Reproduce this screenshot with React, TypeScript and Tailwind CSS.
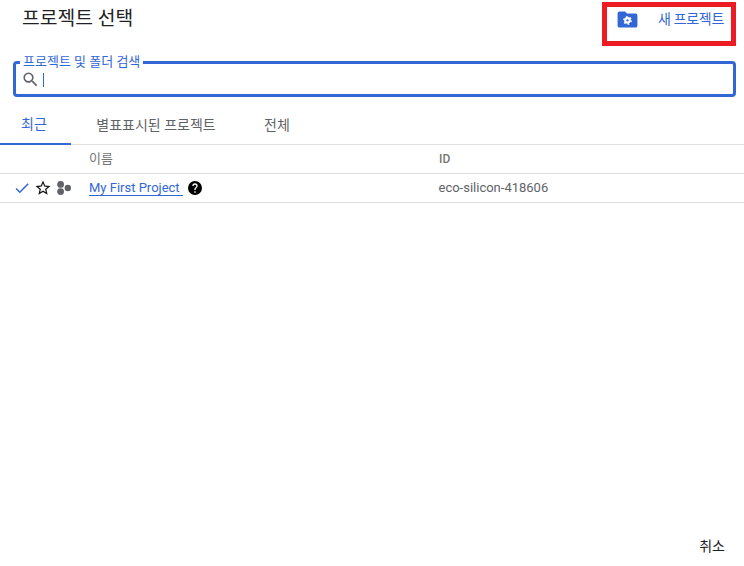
const font = "font-['Roboto','Noto_Sans_CJK_KR',sans-serif]";

function FolderGear() {
  return (
    <svg width="21" height="17" viewBox="0 0 22 18">
      <path d="M2.5 0.5h6l2 2.2h9a2 2 0 0 1 2 2V15.5a2 2 0 0 1-2 2h-17a2 2 0 0 1-2-2V2.5a2 2 0 0 1 2-2z" fill="#3367d6" />
      <circle cx="11" cy="10" r="2.4" fill="none" stroke="#fff" strokeWidth="2.4" />
      <circle cx="11" cy="10" r="4" fill="none" stroke="#fff" strokeWidth="1.4" strokeDasharray="1.8 2.39" />
    </svg>
  );
}

function OrgDots() {
  return (
    <svg width="14" height="14" viewBox="0 0 14 14" fill="#5f6368">
      <circle cx="3.6" cy="3.4" r="3.4" />
      <circle cx="3.6" cy="10.6" r="3.4" />
      <circle cx="10.8" cy="7" r="3.2" />
    </svg>
  );
}

export default function App() {
  return (
    <div className={`${font} w-[744px] h-[566px] bg-white flex flex-col overflow-hidden`}>
      <div className="h-[61px] flex items-start justify-between pl-[22px] pr-2 pt-[2px]">
        <h1 className="text-[19.3px] leading-[30px] mt-[2px] text-[#202124] font-normal">프로젝트 선택</h1>
        <div className="w-[134px] h-[44px] border-[5px] border-[#ed1c24] flex items-center justify-between pl-[10px] pr-[7px] pb-[9px]">
          <FolderGear />
          <span className="text-[14px] tracking-[-0.3px] text-[#3367d6]">새 프로젝트</span>
        </div>
      </div>

      <div className="relative mx-2 ml-[13px] h-[36px] border-[3px] border-[#3367d6] rounded-[4px] flex items-center pl-[5px] pt-[1px]">
        <span className="absolute left-[4px] -top-[9px] bg-white px-[3px] text-[13px] leading-[14px] text-[#3367d6]">프로젝트 및 폴더 검색</span>
        <svg width="19" height="19" viewBox="0 0 24 24" fill="#5f6368">
          <path d="M15.5 14h-.79l-.28-.27A6.47 6.47 0 0 0 16 9.5 6.5 6.5 0 1 0 9.5 16c1.61 0 3.09-.59 4.23-1.57l.27.28v.79l5 4.99L20.49 19l-4.99-5zm-6 0C7.01 14 5 11.99 5 9.5S7.01 5 9.5 5 14 7.01 14 9.5 11.99 14 9.5 14z" />
        </svg>
        <div className="w-px h-[14px] bg-[#3367d6] ml-[3px]" />
      </div>

      <div className="mt-[8px] h-[40px] flex border-b border-[#e0e0e0] text-[14px]">
        <div className="w-[71px] h-[40px] flex items-center justify-center text-[#3367d6] border-b-2 border-[#3367d6] pr-[3px] pt-[1px]">최근</div>
        <div className="w-[168px] flex items-center justify-center text-[#5f6368] pl-[2px] pt-[1px]">별표표시된 프로젝트</div>
        <div className="w-[76px] flex items-center justify-center text-[#5f6368] pt-[1px]">전체</div>
      </div>

      <div className="h-[29px] flex items-center border-b border-[#e0e0e0] text-[13px] text-[#757575]">
        <div className="w-[89px]" />
        <div className="w-[350px]">이름</div>
        <div className="text-[12px] font-medium">ID</div>
      </div>

      <div className="h-[29px] flex items-center border-b border-[#e0e0e0] text-[13px]">
        <div className="w-[89px] flex items-center pl-[13px]">
          <svg width="18" height="18" viewBox="0 0 24 24" fill="#3367d6">
            <path d="M9 16.17 4.83 12l-1.42 1.41L9 19 21 7l-1.41-1.41z" />
          </svg>
          <svg className="ml-[3px]" width="18" height="18" viewBox="0 0 24 24" fill="#111">
            <path d="M22 9.24l-7.19-.62L12 2 9.19 8.63 2 9.24l5.46 4.73L5.82 21 12 17.27 18.18 21l-1.63-7.03L22 9.24zM12 15.4l-3.76 2.27 1-4.28-3.32-2.88 4.38-.38L12 6.1l1.71 4.04 4.38.38-3.32 2.88 1 4.28L12 15.4z" />
          </svg>
          <div className="ml-[5px] flex"><OrgDots /></div>
        </div>
        <div className="w-[350px] flex items-center">
          <span className="text-[#3367d6] border-b border-[#3367d6] leading-[15px] pr-[3px]">My First Project</span>
          <svg className="ml-[4px] mb-[1px]" width="16" height="16" viewBox="0 0 24 24" fill="#000">
            <path d="M12 1.5a10.5 10.5 0 1 0 0 21 10.5 10.5 0 0 0 0-21zm1 17.5h-2v-2h2v2zm2.07-7.75-.9.92C13.45 12.9 13 13.5 13 15h-2v-.5c0-1.1.45-2.1 1.17-2.83l1.24-1.26c.37-.36.59-.86.59-1.41a2 2 0 0 0-4 0H8a4 4 0 0 1 8 0c0 .88-.36 1.68-.93 2.25z" />
          </svg>
        </div>
        <div className="text-[#5f6368] -ml-[0.5px]">eco-silicon-418606</div>
      </div>

      <div className="flex-1 flex items-end justify-end pr-[19px] pb-[11px]">
        <span className="text-[14px] leading-[18px] text-[#202124]">취소</span>
      </div>
    </div>
  );
}
